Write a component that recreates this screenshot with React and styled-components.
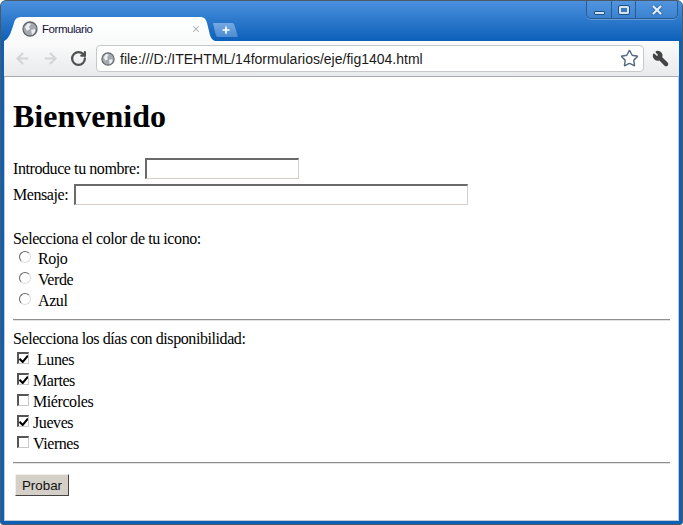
import React from 'react';
import styled, { createGlobalStyle } from 'styled-components';
import { ArrowLeft, ArrowRight, RotateCw, Star, Wrench, Plus, X } from 'lucide-react';

const GlobalStyle = createGlobalStyle`
  html, body {
    margin: 0;
    padding: 0;
    background: #fff;
  }
`;

const Frame = styled.div`
  box-sizing: border-box;
  width: 683px;
  height: 525px;
  display: flex;
  flex-direction: column;
  padding: 0 3px 3px 3px;
  overflow: hidden;
  background: linear-gradient(#4a90de 0, #0c60b8 40px, #0c60b8 100%);
  border: 1px solid #4c5a68;
  border-radius: 6px 6px 3px 3px;
`;

const TitleBar = styled.div`
  height: 40px;
  flex: none;
  display: flex;
  align-items: flex-start;
`;

const TabShape = styled.div`
  width: 211px;
  height: 24px;
  margin-top: 16px;
  padding: 0 14px 0 18px;
  box-sizing: border-box;
  display: flex;
  align-items: center;
  gap: 4px;
  background: linear-gradient(#ffffff, #f9fafa);
  clip-path: path('M0 24 C4 22 6 18 8 12 L10 6 C11 2 13 0 18 0 L196 0 C200 0 202 2 203 6 L205 14 C206 20 208 23 211 24 Z');
`;

const TabTitle = styled.span`
  flex: 1;
  font: 11.5px/16px "Liberation Sans", Arial, sans-serif;
  letter-spacing: -0.45px;
  color: #12123c;
`;

const TabClose = styled(X)`
  color: #a9adb2;
`;

const NewTab = styled.div`
  width: 25px;
  height: 14px;
  margin: 22px 0 0 -2px;
  display: flex;
  align-items: center;
  justify-content: center;
  background: linear-gradient(#76a9e2, #4c8bd2);
  clip-path: path('M0 0 L19 0 C21 0 21 1 22 4 L25 14 L5 14 C3 14 3 12 2 9 Z');
  color: #fff;
`;

const WindowControls = styled.div`
  margin-left: auto;
  margin-right: 1px;
  height: 17px;
  display: flex;
  border: 1px solid #2a5c90;
  border-top: 0;
  border-radius: 0 0 5px 5px;
  box-shadow: 0 1px 0 rgba(255, 255, 255, 0.25);
  background: rgba(255, 255, 255, 0.05);
`;

const WindowButton = styled.div`
  width: ${p => p.$wide}px;
  display: flex;
  align-items: center;
  justify-content: center;
  & + & {
    border-left: 1px solid #2a5c90;
  }
`;

const MinGlyph = styled.span`
  box-sizing: border-box;
  width: 11px;
  height: 4px;
  margin-top: 6px;
  background: #cfe0f3;
  border: 1px solid #24507f;
  border-radius: 1px;
`;

const MaxGlyph = styled.span`
  box-sizing: border-box;
  width: 10px;
  height: 8px;
  background: #3f78b8;
  border: 2px solid #d5e4f5;
  outline: 1px solid #24507f;
  border-radius: 1px;
`;

const CloseGlyph = styled(X)`
  color: #e6eff9;
  filter: drop-shadow(0 0 1px #24507f);
`;

const Toolbar = styled.div`
  flex: none;
  height: 36px;
  box-sizing: border-box;
  display: flex;
  align-items: center;
  padding: 0 8px 0 4px;
  background: linear-gradient(#fbfbfc, #e9eaec);
  border-bottom: 1px solid #a9acb0;
`;

const NavButton = styled.div`
  width: 28px;
  display: flex;
  justify-content: center;
  color: ${p => (p.$on ? '#505050' : '#d3d4d6')};
`;

const Omnibox = styled.div`
  width: 548px;
  height: 27px;
  box-sizing: border-box;
  margin-left: 4px;
  display: flex;
  align-items: center;
  gap: 5px;
  padding: 0 4px 0 4px;
  background: #fff;
  border: 1px solid #c6c8cb;
  border-radius: 4px;
`;

const UrlText = styled.span`
  flex: 1;
  font: 14px/18px "Liberation Sans", Arial, sans-serif;
  color: #1a1a1a;
`;

const WrenchIcon = styled(Wrench)`
  color: #444;
  fill: #444;
  margin-left: 8px;
  transform: scaleX(-1);
`;

const StarIcon = styled(Star)`
  color: #566b82;
`;

const Page = styled.main`
  flex: 1;
  background: #fff;
  padding: 0 8px;
  border: 1px solid #c4c8cc;
  border-top: 0;
  font: 16px/21px "Liberation Serif", "Times New Roman", serif;
  letter-spacing: -0.42px;
  color: #000;
`;

const Heading = styled.h1`
  margin: 21px 0 20px;
  font-size: 32px;
  line-height: 37px;
  font-weight: bold;
  letter-spacing: 0;
`;

const FieldRow = styled.div`
  display: flex;
  align-items: center;
  height: 26px;
  gap: ${p => p.$gap}px;
`;

const TextField = styled.input`
  box-sizing: border-box;
  width: ${p => p.$width}px;
  height: 21px;
  padding: 0 2px;
  background: #fff;
  border-style: solid;
  border-color: #6a6a6a #d4d0c8 #d4d0c8 #6a6a6a;
  border-width: 2px 1px 1px 2px;
  outline: none;
`;

const Section = styled.div`
  margin-top: 21px;
`;

const OptionRow = styled.label`
  box-sizing: border-box;
  display: flex;
  align-items: center;
  height: 21px;
  padding-left: ${p => p.$indent}px;
  padding-bottom: ${p => p.$lift || 0}px;
`;

const Radio = styled.input.attrs({ type: 'radio' })`
  appearance: none;
  box-sizing: border-box;
  width: 12px;
  height: 12px;
  margin: 0 7px 3px 0;
  border-radius: 50%;
  border: 1px solid;
  border-color: #666 #ddd #ddd #666;
  background: #fff;
`;

const Check = styled.input.attrs({ type: 'checkbox' })`
  appearance: none;
  box-sizing: border-box;
  width: 12px;
  height: 12px;
  margin: 0 ${p => p.$gap}px 3px 0;
  background: #fff center / 10px 10px no-repeat;
  border-style: solid;
  border-color: #555 #c8c8c8 #c8c8c8 #555;
  border-width: 2px 1px 1px 2px;
  &:checked {
    background-image: url("data:image/svg+xml,%3Csvg xmlns='http://www.w3.org/2000/svg' viewBox='0 0 10 10'%3E%3Cpath d='M1 5l3 3 5-6' fill='none' stroke='%23000' stroke-width='2'/%3E%3C/svg%3E");
  }
`;

const Rule = styled.hr`
  margin: ${p => p.$top}px 0 ${p => p.$bottom}px;
  height: 0;
  border: 0;
  border-top: 1px solid #8f8f8f;
  border-bottom: 1px solid #e2e2e2;
`;

const SubmitButton = styled.button`
  display: block;
  box-sizing: border-box;
  width: 54px;
  height: 22px;
  margin-left: 2px;
  padding: 0;
  font: 13.4px "Liberation Sans", Arial, sans-serif;
  color: #111;
  background: #d4d0c8;
  border: 1px solid;
  border-color: #eee #444 #444 #eee;
`;

const Globe = ({ size }) => (
  <svg width={size} height={size} viewBox="0 0 16 16">
    <circle cx="8" cy="8" r="7" fill="#a4a9af" stroke="#62666b" strokeWidth="1.3" />
    <path d="M3 6l3-4 3 1-2 3 1 2-3 2zM9 9l4-1 0 3-3 3z" fill="#eceef0" />
  </svg>
);

const colors = ['Rojo', 'Verde', 'Azul'];

const days = [
  { name: 'Lunes', on: true, gap: 8 },
  { name: 'Martes', on: true, gap: 4 },
  { name: 'Miércoles', on: false, gap: 4 },
  { name: 'Jueves', on: true, gap: 4 },
  { name: 'Viernes', on: false, gap: 4 },
];

const App = () => (
  <>
    <GlobalStyle />
    <Frame>
      <TitleBar>
        <TabShape>
          <Globe size={16} />
          <TabTitle>Formulario</TabTitle>
          <TabClose size={10} strokeWidth={2.5} />
        </TabShape>
        <NewTab>
          <Plus size={10} strokeWidth={4} />
        </NewTab>
        <WindowControls>
          <WindowButton $wide={24}><MinGlyph /></WindowButton>
          <WindowButton $wide={23}><MaxGlyph /></WindowButton>
          <WindowButton $wide={41}><CloseGlyph size={14} strokeWidth={3.5} /></WindowButton>
        </WindowControls>
      </TitleBar>
      <Toolbar>
        <NavButton><ArrowLeft size={17} strokeWidth={3} /></NavButton>
        <NavButton><ArrowRight size={17} strokeWidth={3} /></NavButton>
        <NavButton $on><RotateCw size={17} strokeWidth={3.2} /></NavButton>
        <Omnibox>
          <Globe size={14} />
          <UrlText>file:///D:/ITEHTML/14formularios/eje/fig1404.html</UrlText>
          <StarIcon size={19} strokeWidth={1.8} />
        </Omnibox>
        <WrenchIcon size={17} />
      </Toolbar>
      <Page>
        <Heading>Bienvenido</Heading>
        <FieldRow $gap={5}>Introduce tu nombre: <TextField $width={154} /></FieldRow>
        <FieldRow $gap={6}>Mensaje: <TextField $width={394} /></FieldRow>
        <Section>
          Selecciona el color de tu icono:
          {colors.map(c => (
            <OptionRow key={c} $indent={6} $lift={2}><Radio name="color" />{c}</OptionRow>
          ))}
        </Section>
        <Rule $top={7} $bottom={7} />
        Selecciona los días con disponibilidad:
        {days.map(d => (
          <OptionRow key={d.name} $indent={4}>
            <Check defaultChecked={d.on} $gap={d.gap} />
            {d.name}
          </OptionRow>
        ))}
        <Rule $top={8} $bottom={10} />
        <SubmitButton type="button">Probar</SubmitButton>
      </Page>
    </Frame>
  </>
);

export default App;
